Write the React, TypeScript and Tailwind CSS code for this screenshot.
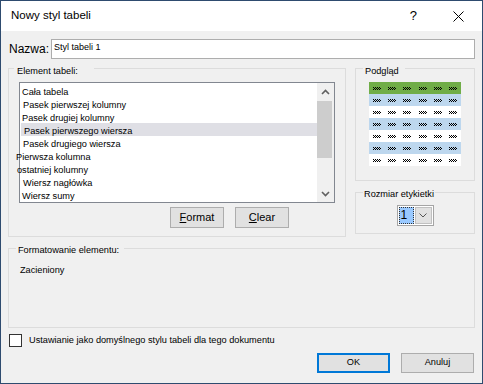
import React from 'react';

const items = [
  { text: 'Cała tabela', cls: 'ml-[2px]' },
  { text: 'Pasek pierwszej kolumny', cls: 'ml-[3px]' },
  { text: 'Pasek drugiej kolumny', cls: 'ml-[2px]' },
  { text: 'Pasek pierwszego wiersza', cls: 'ml-[3px]', selected: true },
  { text: 'Pasek drugiego wiersza', cls: 'ml-[3px]' },
  { text: 'Pierwsza kolumna', cls: '-ml-[4px]' },
  { text: 'ostatniej kolumny', cls: '-ml-[3px]' },
  { text: 'Wiersz nagłówka', cls: 'ml-[3px]' },
  { text: 'Wiersz sumy', cls: 'ml-[2px]' },
];

const previewRows = ['bg-[#70ad47]', 'bg-[#bdd7ee]', 'bg-white', 'bg-[#bdd7ee]', 'bg-white', 'bg-[#bdd7ee]', 'bg-white'];

const Pattern = () => (
  <svg width="8" height="3" viewBox="0 0 8 3" shapeRendering="crispEdges">
    {[0, 2, 4, 6].map((x) => (
      <React.Fragment key={x}>
        <rect x={x} y={0} width={1} height={1} fill="#000" />
        <rect x={x + 1} y={1} width={1} height={1} fill="#000" />
        <rect x={x} y={2} width={1} height={1} fill="#000" />
      </React.Fragment>
    ))}
  </svg>
);

const Chevron = ({ up = false }: { up?: boolean }) => (
  <svg width="9" height="6" viewBox="0 0 9 6">
    <polyline
      points={up ? '1,5 4.5,1.5 8,5' : '1,1 4.5,4.5 8,1'}
      fill="none"
      stroke="#606060"
      strokeWidth="1.6"
    />
  </svg>
);

interface GroupProps {
  label: string;
  labelCls: string;
  className: string;
  children?: React.ReactNode;
}

// group box with the caption sitting on the top line
const Group = ({ label, labelCls, className, children }: GroupProps) => (
  <div className={`relative border border-[#dcdcdc] ${className}`}>
    <span className={`absolute bg-[#f0f0f0] text-[9.2px] leading-[12px] whitespace-nowrap ${labelCls}`}>
      {label}
    </span>
    {children}
  </div>
);

const App = () => {
  return (
    <div className="w-[483px] h-[384px] border border-[#2e4b6f] bg-[#f0f0f0] flex flex-col font-['Liberation_Sans',Arial,sans-serif] text-black">
      {/* title bar */}
      <div className="h-[30px] bg-white flex items-center pl-[10px] pr-[18px]">
        <span className="flex-1 text-[11.5px]">Nowy styl tabeli</span>
        <span className="text-[13px] mr-[36px]">?</span>
        <svg width="11" height="11" viewBox="0 0 11 11">
          <line x1="0.5" y1="0.5" x2="10.5" y2="10.5" stroke="#000" strokeWidth="1" />
          <line x1="10.5" y1="0.5" x2="0.5" y2="10.5" stroke="#000" strokeWidth="1" />
        </svg>
      </div>

      <div className="flex-1 px-[7px] flex flex-col">
        {/* name row */}
        <div className="mt-[8px] h-[20px] flex items-center">
          <span className="w-[43px] pl-[1px] text-[12px]">Nazwa:</span>
          <div className="w-[424px] h-[20px] border border-[#adadad] bg-white pl-[2px] pt-[2px] text-[9px] leading-[11px]">
            Styl tabeli 1
          </div>
        </div>

        <div className="mt-[9px] flex gap-[9px] items-start">
          <Group
            label="Element tabeli:"
            labelCls="-top-[4px] left-[5px] pl-[3px] pr-[16px]"
            className="w-[338px] h-[169px] pt-[13px] pl-[10px] flex flex-col"
          >
            <div className="w-[316px] h-[121px] border border-[#828790] bg-white flex">
              <div className="flex-1 pt-[1px] text-[9.2px]">
                {items.map((it) => (
                  <div
                    key={it.text}
                    className={`h-[13px] whitespace-nowrap ${it.selected ? 'bg-[#dfdfe5] ml-[1px]' : ''}`}
                  >
                    <div className={`pt-[2px] leading-[13px] ${it.selected ? 'ml-[3px]' : it.cls}`}>{it.text}</div>
                  </div>
                ))}
              </div>
              <div className="w-[17px] bg-[#f0f0f0] flex flex-col">
                <div className="h-[17px] flex items-center justify-center">
                  <Chevron up />
                </div>
                <div className="flex-1 pt-[1px]">
                  <div className="h-[57px] w-[15px] bg-[#cdcdcd]" />
                </div>
                <div className="h-[17px] flex items-center justify-center">
                  <Chevron />
                </div>
              </div>
            </div>
            <div className="mt-[4px] flex gap-[11px] pl-[151px] text-[11px]">
              <button className="w-[54px] h-[21px] border border-[#adadad] bg-[#e1e1e1]">
                <u>F</u>ormat
              </button>
              <button className="w-[54px] h-[21px] border border-[#adadad] bg-[#e1e1e1]">
                <u>C</u>lear
              </button>
            </div>
          </Group>

          <div className="w-[120px] flex flex-col gap-[11px]">
            <Group
              label="Podgląd"
              labelCls="-top-[4px] left-[7px] pl-[2px] pr-[6px]"
              className="h-[113px] pt-[13px] pl-[13px]"
            >
              <div className="w-[92px] flex flex-col">
                {previewRows.map((bg, r) => (
                  <div key={r} className={`h-[12px] grid grid-cols-6 ${bg}`}>
                    {[0, 1, 2, 3, 4, 5].map((c) => (
                      <div key={c} className="flex items-center justify-center">
                        <Pattern />
                      </div>
                    ))}
                  </div>
                ))}
              </div>
            </Group>
            <Group
              label="Rozmiar etykietki"
              labelCls="-top-[5px] left-[7px] pl-[1px] pr-[1px]"
              className="h-[42px] pt-[12px] flex justify-center"
            >
              <div className="w-[37px] h-[21px] border border-[#a5a5a5] bg-white p-[1px] flex gap-[1px]">
                <div className="w-[15px] bg-[#99c9ff] border border-dotted border-[#333] text-[12px] leading-[15px] pl-[1px]">
                  1
                </div>
                <div className="flex-1 bg-[#e1e1e1] border border-[#c0c0c0] flex items-center justify-center">
                  <svg width="8" height="5" viewBox="0 0 8 5">
                    <polyline points="0.5,0.5 4,4 7.5,0.5" fill="none" stroke="#555" strokeWidth="1" />
                  </svg>
                </div>
              </div>
            </Group>
          </div>
        </div>

        <Group
          label="Formatowanie elementu:"
          labelCls="-top-[5px] left-[7px] pl-[2px] pr-[5px]"
          className="mt-[11px] h-[80px] pt-[15px] pl-[11px]"
        >
          <div className="text-[9.2px] leading-[12px]">Zacieniony</div>
        </Group>

        <div className="mt-[6px] h-[13px] flex items-center">
          <div className="ml-[1px] w-[13px] h-[13px] border border-[#333] bg-white" />
          <span className="ml-[7px] text-[9.2px]">Ustawianie jako domyślnego stylu tabeli dla tego dokumentu</span>
        </div>

        <div className="mt-[6px] flex justify-end gap-[11px] pr-[1px] text-[9.2px]">
          <button className="w-[73px] h-[20px] border-2 border-[#0078d7] bg-[#e1e1e1]">OK</button>
          <button className="w-[73px] h-[20px] border border-[#adadad] bg-[#e1e1e1]">Anuluj</button>
        </div>
      </div>
    </div>
  );
};

export default App;
